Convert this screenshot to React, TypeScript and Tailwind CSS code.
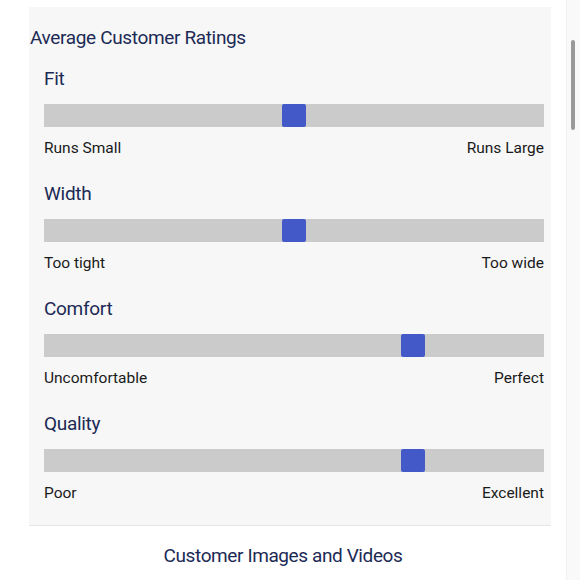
import React from 'react';

interface Rating {
  name: string;
  low: string;
  high: string;
  value: number;
}

const ratings: Rating[] = [
  { name: 'Fit', low: 'Runs Small', high: 'Runs Large', value: 0.5 },
  { name: 'Width', low: 'Too tight', high: 'Too wide', value: 0.5 },
  { name: 'Comfort', low: 'Uncomfortable', high: 'Perfect', value: 0.75 },
  { name: 'Quality', low: 'Poor', high: 'Excellent', value: 0.75 },
];

const RatingBar: React.FC<{ rating: Rating }> = ({ rating }) => (
  <div className="flex flex-col">
    <div className="text-[19px] leading-[24px] tracking-[-0.3px] text-[#1c2a55]">{rating.name}</div>
    {/* track, thumb sits inside its width minus the thumb */}
    <div className="mt-[13px] h-[23px] bg-[#cbcbcb] relative">
      <div
        className="absolute top-0 h-[23px] w-[24px] rounded-[2px] bg-[#4459c8]"
        style={{ left: `calc(${rating.value} * (100% - 24px))` }}
      />
    </div>
    <div className="mt-[11px] flex justify-between text-[15.5px] leading-[20px] text-[#1a1a1a]">
      <span>{rating.low}</span>
      <span>{rating.high}</span>
    </div>
  </div>
);

export default function App() {
  return (
    <div
      className="relative w-[580px] h-[580px] bg-white overflow-hidden"
      style={{ fontFamily: 'Roboto, "Liberation Sans", sans-serif' }}
    >
      <div className="flex h-full">
        <div className="w-[566px] flex flex-col">
          <div className="ml-[29px] mr-[15px] mt-[7px] bg-[#f7f7f7] border-b border-[#e6e6e6] pt-[19px] pb-[22px] pr-[7px]">
            <div className="pl-px text-[19px] leading-[24px] tracking-[-0.35px] text-[#1c2a55]">
              Average Customer Ratings
            </div>
            <div className="mt-[17px] pl-[15px] flex flex-col gap-[24px]">
              {ratings.map((r) => (
                <RatingBar key={r.name} rating={r} />
              ))}
            </div>
          </div>
          <div className="mt-[18px] text-center text-[19px] leading-[24px] tracking-[-0.4px] text-[#1c2a55]">
            Customer Images and Videos
          </div>
        </div>
        <div className="flex-1 bg-[#f9f9f9] border-l border-[#f0f0f0]" />
      </div>
      {/* scrollbar */}
      <div className="absolute left-[571px] top-[40px] w-[4px] h-[90px] rounded-full bg-[#9a9a9a]" />
    </div>
  );
}
